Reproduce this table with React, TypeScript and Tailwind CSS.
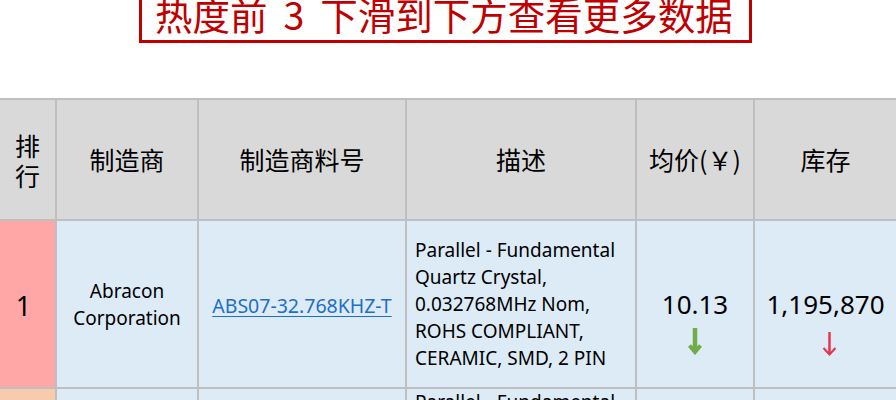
import React from "react";

const cjk = { fontFamily: '"Noto Sans CJK SC", "Noto Sans", sans-serif' };
const latin = { fontFamily: '"Noto Sans", "Noto Sans CJK SC", sans-serif' };

const headers = ["制造商", "制造商料号", "描述", "均价(￥)", "库存"];

const GreenDown = () => (
  <svg width="14" height="27" viewBox="0 0 14 27">
    <path d="M7 0 V23" stroke="#70ad47" strokeWidth="4.5" fill="none" />
    <path d="M1.5 17.5 L7 24 L12.5 17.5" stroke="#70ad47" strokeWidth="4" fill="none" strokeLinejoin="miter" />
  </svg>
);

const RedDown = () => (
  <svg width="15" height="25" viewBox="0 0 15 25">
    <path d="M7.5 0 V22" stroke="#e8334a" strokeWidth="2.5" fill="none" />
    <path d="M1.5 16 L7.5 22.5 L13.5 16" stroke="#e8334a" strokeWidth="2" fill="none" />
  </svg>
);

const rows = [
  {
    rank: "1",
    rankBg: "bg-[#ffa6a6]",
    maker: ["Abracon", "Corporation"],
    part: "ABS07-32.768KHZ-T",
    desc: ["Parallel - Fundamental", "Quartz Crystal,", "0.032768MHz Nom,", "ROHS COMPLIANT,", "CERAMIC, SMD, 2 PIN"],
    price: "10.13",
    stock: "1,195,870",
  },
  {
    rank: "2",
    rankBg: "bg-[#f8cbad]",
    maker: ["Abracon", "Corporation"],
    part: "ABS07-32.768KHZ-9-T",
    desc: ["Parallel - Fundamental", "Quartz Crystal,", "0.032768MHz Nom,", "ROHS COMPLIANT,", "CERAMIC, SMD, 2 PIN,", "LEAD FREE"],
    price: "8.62",
    stock: "912,330",
  },
];

export default function App() {
  return (
    <div className="w-[896px] h-[400px] overflow-hidden bg-white">
      {/* banner */}
      <div className="ml-[139px] mt-[-12px] w-[613px] border-[3px] border-[#c00000] pt-[4px] pb-[7px] pl-[13px]">
        <div className="text-[37.5px] leading-[38px] text-[#c00000] whitespace-nowrap" style={cjk}>
          热度前<span className="px-[16px]">3</span>下滑到下方查看更多数据
        </div>
      </div>

      <div className="mt-[55px] grid grid-cols-[55px_140px_206px_228px_116px_1fr] gap-[2px] bg-[#bfbfbf] pt-[2px]">
        <div className="h-[119px] bg-[#d9d9d9] flex items-center justify-center text-[25px] leading-[30px] text-black text-center" style={cjk}>
          排<br />行
        </div>
        {headers.map((h) => (
          <div key={h} className="h-[119px] bg-[#d9d9d9] flex items-center justify-center text-[25px] text-black whitespace-nowrap" style={cjk}>
            {h}
          </div>
        ))}

        {rows.map((r, i) => (
          <React.Fragment key={r.rank}>
            <div className={`h-[166px] ${r.rankBg} flex items-center justify-center pr-[8px] text-[27px] text-black pt-[4px]`} style={latin}>
              {r.rank}
            </div>
            <div className="h-[166px] bg-[#ddebf7] flex flex-col items-center justify-center text-[19px] leading-[27px] text-black pt-[1px]" style={latin}>
              {r.maker.map((m) => (
                <span key={m}>{m}</span>
              ))}
            </div>
            <div className="h-[166px] bg-[#ddebf7] flex items-center justify-center text-[19.5px] pt-[3px]" style={latin}>
              <span className="text-[#1e6fc8] underline decoration-[#1e6fc8] underline-offset-[3px]">{r.part}</span>
            </div>
            <div
              className={`h-[166px] bg-[#ddebf7] flex flex-col pl-[8px] text-[19px] leading-[27px] text-black whitespace-nowrap overflow-hidden ${
                i === 0 ? "justify-center pt-[1px]" : "justify-start pt-[0px]"
              }`}
              style={latin}
            >
              {r.desc.map((d) => (
                <span key={d}>{d}</span>
              ))}
            </div>
            <div className="h-[166px] bg-[#ddebf7] flex flex-col items-center justify-center" style={latin}>
              <div className="h-[33px]" />
              <div className="text-[26px] leading-[36px] text-black">{r.price}</div>
              <div className="mt-[6px]">
                <GreenDown />
              </div>
            </div>
            <div className="h-[166px] bg-[#ddebf7] flex flex-col items-center justify-center" style={latin}>
              <div className="h-[35px]" />
              <div className="text-[26px] leading-[36px] text-black">{r.stock}</div>
              <div className="mt-[10px] ml-[8px]">
                <RedDown />
              </div>
            </div>
          </React.Fragment>
        ))}
      </div>
    </div>
  );
}
